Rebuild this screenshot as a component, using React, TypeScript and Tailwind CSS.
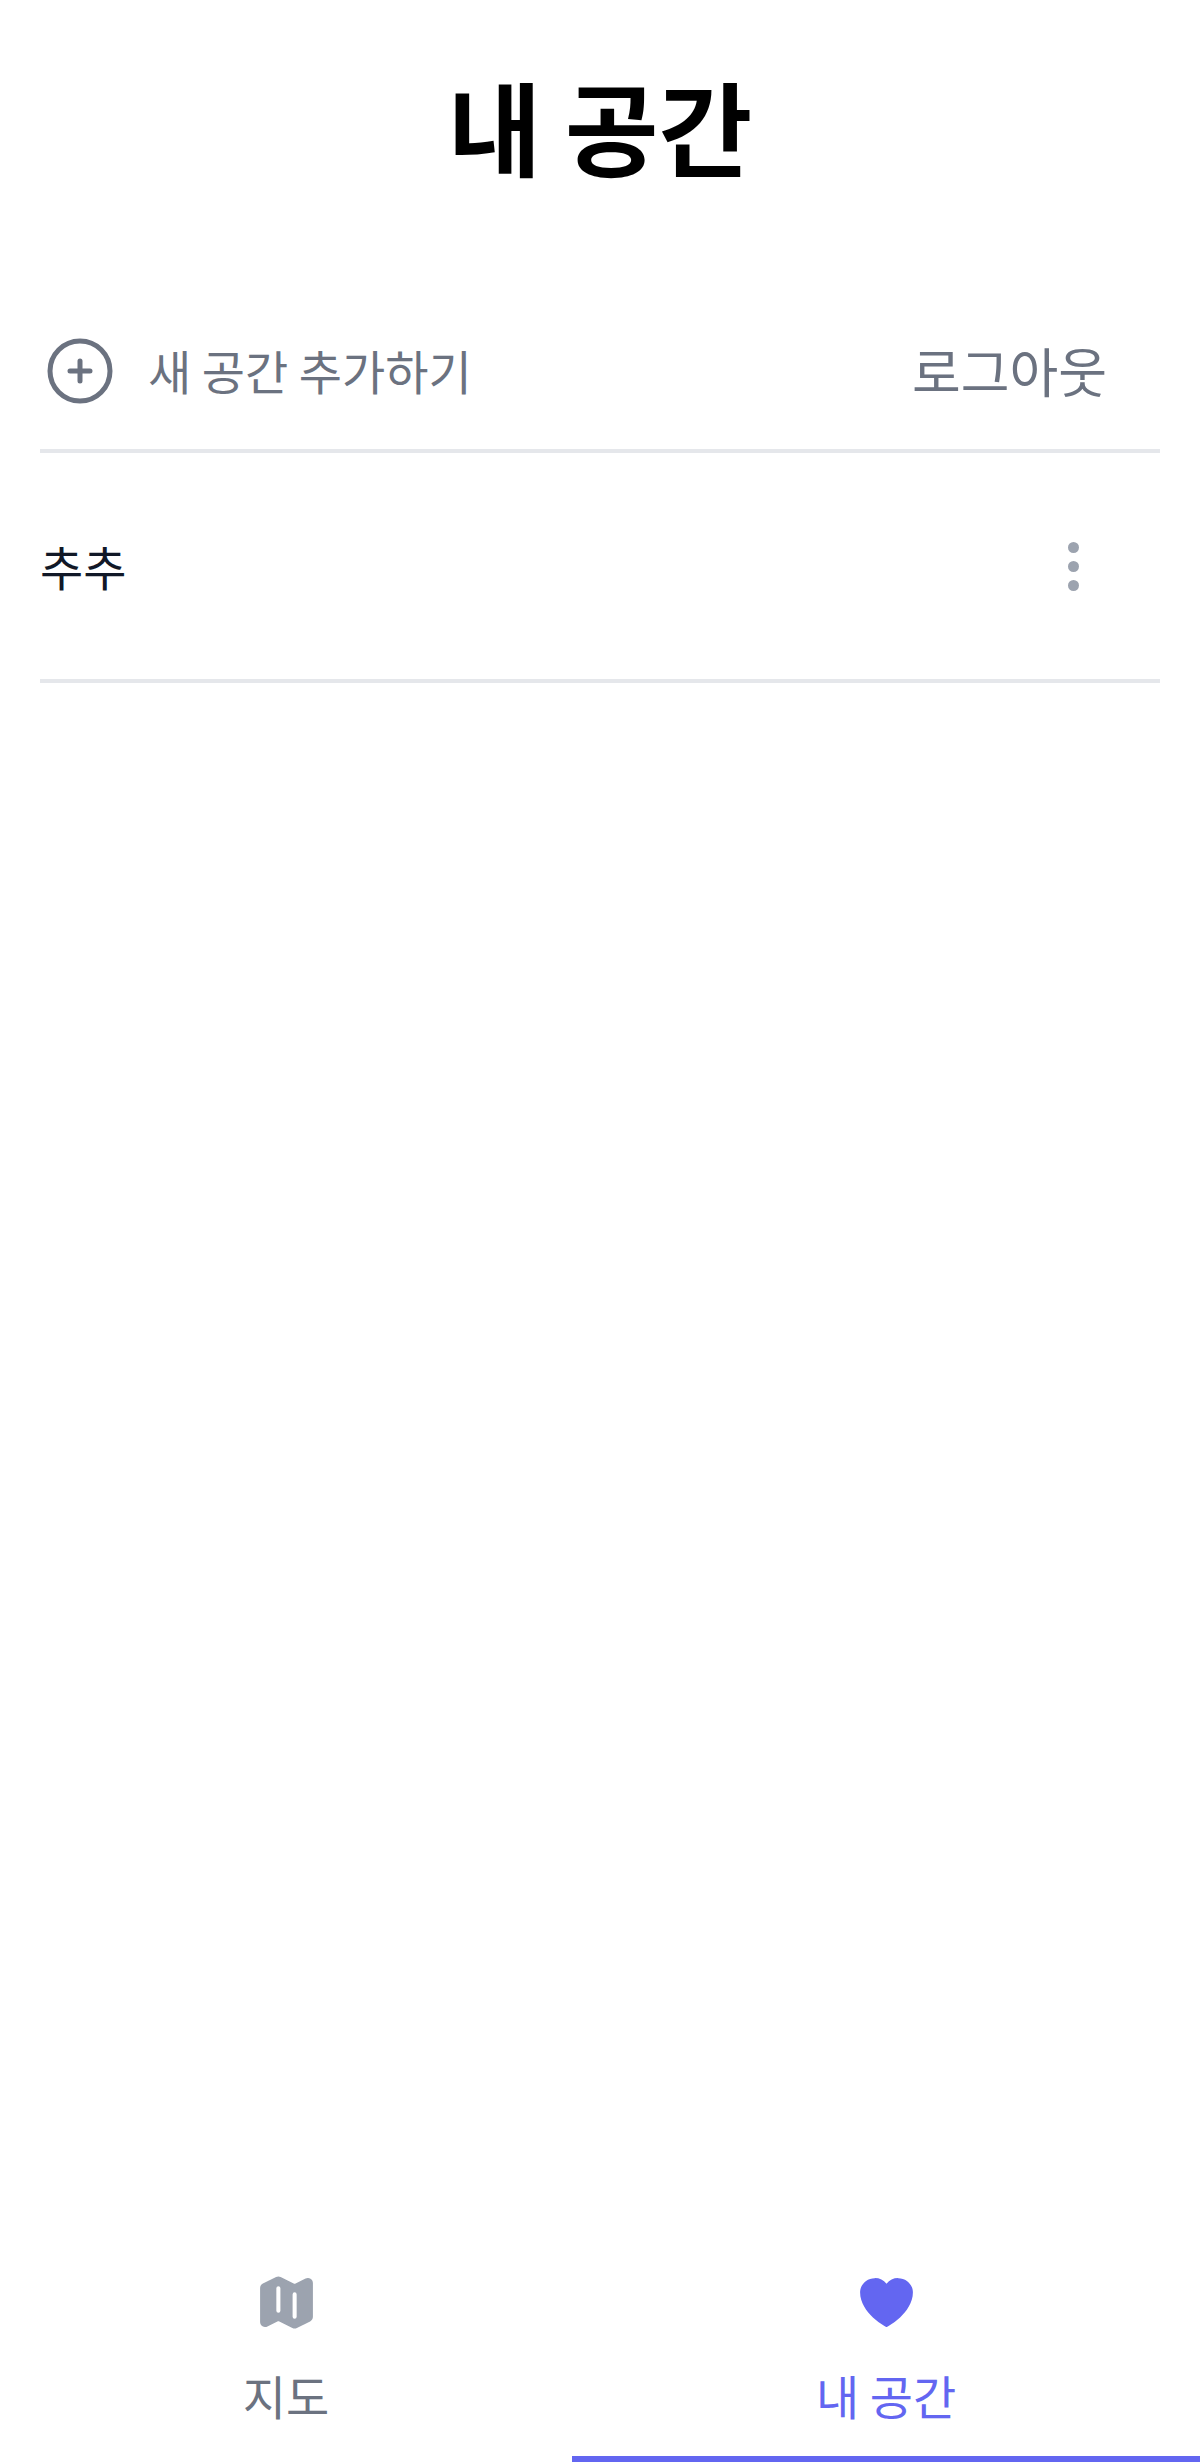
const font = { fontFamily: '"Noto Sans CJK KR", "Noto Sans", sans-serif' };

const PlusCircleIcon = () => (
  <svg viewBox="0 0 24 24" fill="none" stroke="currentColor" strokeWidth={1.5} className="w-20 h-20 text-[#6b7280] shrink-0">
    <path strokeLinecap="round" strokeLinejoin="round" d="M12 9v6m3-3H9m12 0a9 9 0 11-18 0 9 9 0 0118 0z" />
  </svg>
);

const MapIcon = () => (
  <svg viewBox="0 0 24 24" fill="currentColor" className="w-[65px] h-[65px] text-[#9ca3af]">
    <path
      fillRule="evenodd"
      clipRule="evenodd"
      d="M8.161 2.58a1.875 1.875 0 011.678 0l4.993 2.498c.106.052.23.052.336 0l3.869-1.935A1.875 1.875 0 0121.75 4.82v12.485c0 .71-.401 1.36-1.037 1.677l-4.875 2.437a1.875 1.875 0 01-1.676 0l-4.994-2.497a.375.375 0 00-.336 0l-3.868 1.935A1.875 1.875 0 012.25 19.18V6.695c0-.71.401-1.36 1.036-1.677l4.875-2.437zM9 6a.75.75 0 01.75.75V15a.75.75 0 01-1.5 0V6.75A.75.75 0 019 6zm6.75 3a.75.75 0 00-1.5 0v8.25a.75.75 0 001.5 0V9z"
    />
  </svg>
);

const HeartIcon = () => (
  <svg viewBox="0 0 24 24" fill="currentColor" className="w-[65px] h-[65px] text-[#6366f1]">
    <path d="M11.645 20.91l-.007-.003-.022-.012a15.247 15.247 0 01-.383-.218 25.18 25.18 0 01-4.244-3.17C4.688 15.36 2.25 12.174 2.25 8.25 2.25 5.322 4.714 3 7.688 3A5.5 5.5 0 0112 5.052 5.5 5.5 0 0116.313 3c2.973 0 5.437 2.322 5.437 5.25 0 3.925-2.438 7.111-4.739 9.256a25.175 25.175 0 01-4.244 3.17 15.247 15.247 0 01-.383.219l-.022.012-.007.004-.003.001a.752.752 0 01-.704 0l-.003-.001z" />
  </svg>
);

export default function App() {
  return (
    <div className="h-[2462px] w-[1200px] bg-white flex flex-col" style={font}>
      <main className="flex-1 px-10">
        <h1 className="pt-[53px] text-center text-[102px] leading-[144px] font-bold text-black">내 공간</h1>

        <div className="mt-[95px] h-[161px] flex items-center justify-between pr-[53px] border-b-4 border-[#e5e7eb]">
          <button className="flex items-center gap-[28px] text-[47px] text-[#6b7280]">
            <PlusCircleIcon />
            <span>새 공간 추가하기</span>
          </button>
          <button className="text-[53px] text-[#6b7280]">로그아웃</button>
        </div>

        <div className="h-[230px] flex items-center justify-between border-b-4 border-[#e5e7eb]">
          <span className="text-[47px] text-[#111827]">추추</span>
          <div className="flex flex-col gap-[8px] mr-[81px]">
            <span className="w-[11px] h-[11px] rounded-full bg-[#9ca3af]" />
            <span className="w-[11px] h-[11px] rounded-full bg-[#9ca3af]" />
            <span className="w-[11px] h-[11px] rounded-full bg-[#9ca3af]" />
          </div>
        </div>
      </main>

      <nav className="h-[196px] grid grid-cols-[572px_628px]">
        <button className="flex flex-col items-center pt-[4px] text-[47px] leading-[68px] text-[#6b7280]">
          <MapIcon />
          <span className="mt-[26px]">지도</span>
        </button>
        <button className="flex flex-col items-center pt-[4px] text-[47px] leading-[68px] text-[#6366f1] border-b-[6px] border-[#6366f1]">
          <HeartIcon />
          <span className="mt-[26px]">내 공간</span>
        </button>
      </nav>
    </div>
  );
}
